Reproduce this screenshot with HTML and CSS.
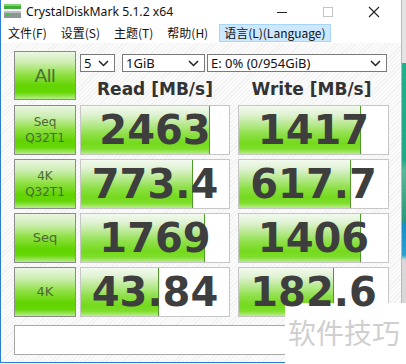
FILE: index.html
```html
<!DOCTYPE html>
<html>
<head>
<meta charset="utf-8">
<link rel="stylesheet" href="styles.css">
</head>
<body>
<div class="desk">
  <div class="win">
    <div class="titlebar">
      <svg class="appicon" width="17" height="14" viewBox="0 0 17 14">
        <rect x="0" y="0" width="17" height="5" fill="#3fae3a"/>
        <rect x="0" y="0" width="17" height="2" fill="#7fd46a"/>
        <rect x="0" y="7" width="17" height="7" fill="#8d9696"/>
        <rect x="0" y="7" width="17" height="2" fill="#b9c1c1"/>
        <rect x="2" y="10" width="3" height="2" fill="#48c040"/>
      </svg>
      <span class="title">CrystalDiskMark 5.1.2 x64</span>
      <div class="controls">
        <svg width="46" height="20" viewBox="0 0 46 20"><line x1="18" y1="11.5" x2="28" y2="11.5" stroke="#222" stroke-width="1"/></svg>
        <svg width="46" height="20" viewBox="0 0 46 20"><rect x="18.5" y="6.5" width="9" height="9" fill="none" stroke="#c4c4c4" stroke-width="1"/></svg>
        <svg width="46" height="20" viewBox="0 0 46 20"><path d="M18 6 L28 16 M28 6 L18 16" stroke="#222" stroke-width="1.1"/></svg>
      </div>
    </div>
    <div class="menubar">
      <span class="mi">文件(F)</span>
      <span class="mi">设置(S)</span>
      <span class="mi">主题(T)</span>
      <span class="mi">帮助(H)</span>
      <span class="mi active">语言(L)(Language)</span>
    </div>
    <div class="main">
      <div class="grid">
        <div class="lbl all">All</div>
        <div class="top">
          <div class="selects">
            <div class="sel s1"><span>5</span><svg width="11" height="7" viewBox="0 0 11 7"><path d="M1 1 L5.5 5.5 L10 1" fill="none" stroke="#222" stroke-width="1.5"/></svg></div>
            <div class="sel s2"><span>1GiB</span><svg width="11" height="7" viewBox="0 0 11 7"><path d="M1 1 L5.5 5.5 L10 1" fill="none" stroke="#222" stroke-width="1.5"/></svg></div>
            <div class="sel s3"><span>E: 0% (0/954GiB)</span><svg width="11" height="7" viewBox="0 0 11 7"><path d="M1 1 L5.5 5.5 L10 1" fill="none" stroke="#222" stroke-width="1.5"/></svg></div>
          </div>
          <div class="heads">
            <div class="head">Read [MB/s]</div>
            <div class="head">Write [MB/s]</div>
          </div>
        </div>

        <div class="lbl"><span>Seq</span><span>Q32T1</span></div>
        <div class="val read"><div class="bar" style="width:87%"></div><div class="num">2463</div></div>
        <div class="val write"><div class="bar" style="width:82%"></div><div class="num">1417</div></div>

        <div class="lbl"><span>4K</span><span>Q32T1</span></div>
        <div class="val read"><div class="bar" style="width:76%"></div><div class="num">773.4</div></div>
        <div class="val write"><div class="bar" style="width:75%"></div><div class="num">617.7</div></div>

        <div class="lbl big"><span>Seq</span></div>
        <div class="val read"><div class="bar" style="width:84%"></div><div class="num">1769</div></div>
        <div class="val write"><div class="bar" style="width:82%"></div><div class="num">1406</div></div>

        <div class="lbl big"><span>4K</span></div>
        <div class="val read"><div class="bar" style="width:53%"></div><div class="num">43.84</div></div>
        <div class="val write"><div class="bar" style="width:64%"></div><div class="num">182.6</div></div>
      </div>
      <div class="comment"></div>
    </div>
  </div>
  <div class="strip"></div>
  <div class="watermark">软件技巧</div>
</div>
</body>
</html>
```

FILE: styles.css
```css
* { box-sizing: border-box; }
body {
  margin: 0;
  width: 406px;
  height: 364px;
  overflow: hidden;
  font-family: "Noto Sans", "Noto Sans CJK SC", sans-serif;
  background: #fff;
}
.desk {
  position: relative;
  display: flex;
  width: 406px;
  height: 364px;
}
.win {
  width: 402px;
  height: 363px;
  border-left: 1px solid #2a7fd0;
  border-bottom: 1px solid #2a7fd0;
  border-right: 1px solid #b8b8b8;
  display: flex;
  flex-direction: column;
  background: #fff;
}
.titlebar {
  height: 23px;
  display: flex;
  align-items: center;
  padding-left: 3px;
}
.appicon { margin-top: -1px; }
.title {
  margin-left: 5px;
  font-size: 12.2px;
  color: #111;
  font-family: "Noto Sans", "Noto Sans CJK SC", sans-serif;
}
.controls {
  margin-left: auto;
  display: flex;
  margin-right: 4px;
  margin-top: -2px;
}
.menubar {
  height: 20px;
  display: flex;
  align-items: center;
  font-size: 12px;
  color: #111;
  font-family: "Noto Sans CJK SC", sans-serif;
}
.mi {
  padding: 0 7px;
  line-height: 18px;
}
.mi.active {
  margin-left: 4px;
  padding: 0 4px;
  background: #cce8ff;
  border: 1px solid #a8d4f8;
  line-height: 16px;
}
.main {
  flex: 1;
  padding: 8px 0 0 13px;
  background: repeating-linear-gradient(135deg, #fbfbfb 0 2px, #f1f1f1 2px 3px);
}
.grid {
  display: grid;
  grid-template-columns: 62px 152px 151px;
  grid-template-rows: 50px repeat(4, 50px);
  column-gap: 4px;
  row-gap: 4px;
}
.lbl {
  border: 1px solid #8c8c8c;
  background: linear-gradient(to bottom, #eaf6e2 0%, #cdeeb2 22%, #90e044 48%, #62d402 72%, #66d606 86%, #b6ee88 100%);
  display: flex;
  flex-direction: column;
  align-items: center;
  justify-content: center;
  font-family: "DejaVu Sans", sans-serif;
  font-size: 12px;
  line-height: 16px;
  color: #4a6a36;
}
.lbl.big { font-size: 13px; }
.lbl.all {
  font-family: "Liberation Sans", sans-serif;
  font-size: 19px;
  color: #4c7038;
  height: 49px;
}
.top {
  grid-column: 2 / 4;
  display: flex;
  flex-direction: column;
}
.selects {
  margin-top: 3px;
  height: 18px;
  display: flex;
}
.sel {
  height: 18px;
  border: 1px solid #7a7a7a;
  background: #fff;
  display: flex;
  align-items: center;
  justify-content: space-between;
  padding: 0 5px 0 3px;
  font-size: 13px;
  color: #111;
}
.s1 { width: 35px; }
.s2 { width: 83px; margin-left: 7px; }
.s3 { width: 180px; margin-left: 2px; }
.heads {
  display: grid;
  grid-template-columns: 150px 151px;
  column-gap: 6px;
  margin-top: 6px;
}
.head {
  text-align: center;
  font-family: "DejaVu Sans", sans-serif;
  font-weight: bold;
  font-size: 17px;
  line-height: 22px;
  color: #333;
}
.val {
  border: 1px solid #c6c6c6;
  background: #fff;
  display: grid;
  height: 50px;
}
.val.read { width: 150px; }
.val.write { margin-left: 2px; width: 151px; }
.bar {
  grid-area: 1 / 1;
  justify-self: start;
  height: 100%;
  border-right: 1px solid #4f9a28;
  background: linear-gradient(to bottom, #f3f9ef 0%, #dff2d2 18%, #b4e88a 40%, #8ee048 58%, #74da1c 78%, #80de2e 90%, #b8ee8c 100%);
}
.num {
  grid-area: 1 / 1;
  align-self: center;
  justify-self: center;
  font-family: "DejaVu Sans", sans-serif;
  font-weight: bold;
  font-size: 40px;
  line-height: 48px;
  color: #3e3e3e;
  z-index: 1;
}
.comment {
  margin-top: 8px;
  width: 374px;
  height: 30px;
  border: 1px solid #a8a8a8;
  background: #fff;
}
.strip {
  flex: 1;
  background: linear-gradient(to bottom, #e4e4e4 0, #e4e4e4 63px, #1fb08e 63px, #21a889 160px, #5ab79a 170px, #2a9a7a 220px, #1a8ec8 225px, #2aa0d0 255px, #d8d8d8 260px, #d8d8d8 364px);
}
.watermark {
  position: absolute;
  left: 285px;
  top: 303px;
  width: 121px;
  height: 61px;
  background: #fff;
  font-family: "Noto Sans CJK SC", sans-serif;
  font-size: 28px;
  color: #cfcfcf;
  padding: 9px 0 0 3px;
  line-height: 40px;
}
```
